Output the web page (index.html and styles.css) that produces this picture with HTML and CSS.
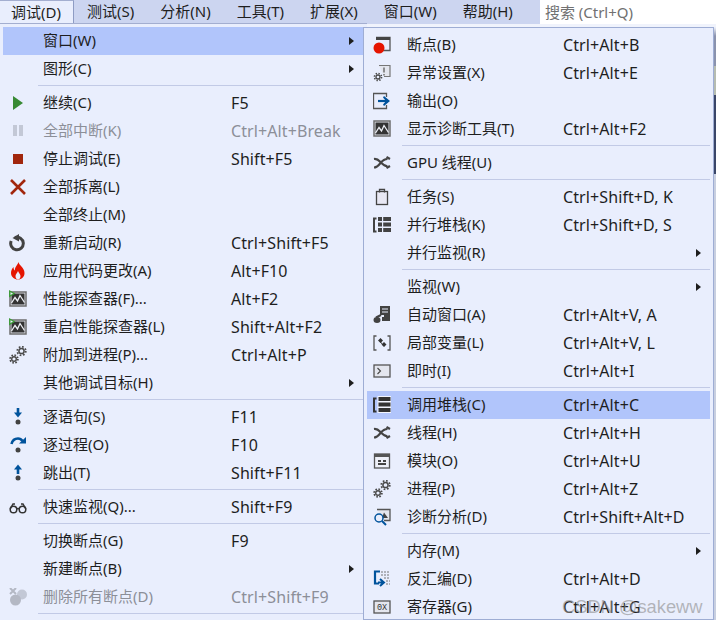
FILE: index.html
```html
<!DOCTYPE html>
<html lang="zh-CN">
<head>
    <meta charset="UTF-8">
    <title>调试菜单</title>
    <link rel="stylesheet" href="styles.css">
</head>
<body>
<svg class="sprites" width="0" height="0">
    <symbol id="i-perf" viewBox="0 0 18 18">
        <rect x="1" y="2" width="16" height="14" fill="#e4e6ee" stroke="#6d6d6d" stroke-width="1.500"/>
        <path d="M2.500 3.500h13v11h-13z" fill="#333"/>
        <path d="M2.500 13l3.500-5.500 2.500 3.500 2.500-5.500 4.500 7" fill="none" stroke="#eef0f6" stroke-width="1.300"/>
        <path d="M0 0l6.500 3.500-6.500 4z" fill="#3f9b3a"/>
        <path d="M1.500 2.200l2.500 1.300-2.500 1.500z" fill="#e9eefd"/>
    </symbol>
    <symbol id="i-chart" viewBox="0 0 18 18">
        <rect x="1" y="1" width="16" height="15" fill="#e4e6ee" stroke="#6d6d6d" stroke-width="1.500"/>
        <path d="M2.500 2.500h13v12h-13z" fill="#333"/>
        <path d="M2.500 13l3.500-5.500 2.500 3.500 2.500-5.500 4.500 7" fill="none" stroke="#eef0f6" stroke-width="1.300"/>
    </symbol>
    <symbol id="i-gears" viewBox="0 0 18 18">
        <g fill="none" stroke="#4a4a4a">
            <circle cx="12.500" cy="5" r="2.600" stroke-width="1.500"/>
            <circle cx="12.500" cy="5" r="4.300" stroke-width="1.700" stroke-dasharray="1.700 1.680"/>
            <circle cx="5" cy="13" r="2.300" stroke-width="1.400"/>
            <circle cx="5" cy="13" r="3.900" stroke-width="1.700" stroke-dasharray="1.600 1.460"/>
        </g>
    </symbol>
    <symbol id="i-threads" viewBox="0 0 18 18">
        <g fill="none" stroke="#444" stroke-width="2.200">
            <path d="M1 5c3-.5 4.500 1 6.500 3s4 4.500 7 4"/>
            <path d="M1 13.500c3 0 4.500-2 6.500-4.500s3.500-4 7-4"/>
            <path d="M13.500 3l3.500 2M13.500 14l3.500-2"/>
        </g>
    </symbol>
</svg>

<div class="topbar">
    <div class="tab active">调试(D)</div>
    <div class="tab">测试(S)</div>
    <div class="tab">分析(N)</div>
    <div class="tab">工具(T)</div>
    <div class="tab">扩展(X)</div>
    <div class="tab">窗口(W)</div>
    <div class="tab">帮助(H)</div>
    <div class="search">搜索 (Ctrl+Q)</div>
</div>

<div class="menus">
    <div class="menu main">
        <div class="item hot"><span class="icon"></span><span class="label">窗口(W)</span><span class="key"></span><span class="more"></span></div>
        <div class="item"><span class="icon"></span><span class="label">图形(C)</span><span class="key"></span><span class="more"></span></div>
        <div class="sep"></div>
        <div class="item"><span class="icon"><svg viewBox="0 0 18 18"><path d="M4 2l10 7-10 7z" fill="#388a34"/></svg></span><span class="label">继续(C)</span><span class="key">F5</span></div>
        <div class="item off"><span class="icon"><svg viewBox="0 0 18 18"><path d="M4 3h4v11h-4zM10 3h4v11h-4z" fill="#c3c8d6"/></svg></span><span class="label">全部中断(K)</span><span class="key">Ctrl+Alt+Break</span></div>
        <div class="item"><span class="icon"><svg viewBox="0 0 18 18"><rect x="4" y="4" width="10" height="10" fill="#a1260d"/></svg></span><span class="label">停止调试(E)</span><span class="key">Shift+F5</span></div>
        <div class="item"><span class="icon"><svg viewBox="0 0 18 18"><path d="M2 2l14 14M16 2l-14 14" stroke="#a1260d" stroke-width="2.600" fill="none"/></svg></span><span class="label">全部拆离(L)</span><span class="key"></span></div>
        <div class="item"><span class="icon"></span><span class="label">全部终止(M)</span><span class="key"></span></div>
        <div class="item"><span class="icon"><svg viewBox="0 0 18 18"><path d="M6 3.500a6.300 6.300 0 1 1-3.800 3.500" fill="none" stroke="#424242" stroke-width="3"/><path d="M10 0v7.500l-6.500-3.500z" fill="#424242"/></svg></span><span class="label">重新启动(R)</span><span class="key">Ctrl+Shift+F5</span></div>
        <div class="item"><span class="icon"><svg viewBox="0 0 18 18"><path d="M9.500 0c.5 3.500 6 5.500 6 11 0 4-3 6.500-6.500 6.500s-7-2.500-7-6.500c0-2.500 1-4.500 2.500-6 0 2 .5 3 1.500 3.500C5.500 5 8.500 3.500 9.500 0z" fill="#e51400"/><path d="M9 9c.5 2 2.500 3 2.500 5s-1 3.500-2.500 3.500-2.500-1.500-2.500-3.500 2-3 2.500-5z" fill="#e9eefd"/></svg></span><span class="label">应用代码更改(A)</span><span class="key">Alt+F10</span></div>
        <div class="item"><span class="icon"><svg><use href="#i-perf"/></svg></span><span class="label">性能探查器(F)...</span><span class="key">Alt+F2</span></div>
        <div class="item"><span class="icon"><svg><use href="#i-perf"/></svg></span><span class="label">重启性能探查器(L)</span><span class="key">Shift+Alt+F2</span></div>
        <div class="item"><span class="icon"><svg><use href="#i-gears"/></svg></span><span class="label">附加到进程(P)...</span><span class="key">Ctrl+Alt+P</span></div>
        <div class="item"><span class="icon"></span><span class="label">其他调试目标(H)</span><span class="key"></span><span class="more"></span></div>
        <div class="sep"></div>
        <div class="item"><span class="icon"><svg viewBox="0 0 18 18"><path d="M9 0v7" stroke="#00539c" stroke-width="2.600"/><path d="M5 4.500h8l-4 5z" fill="#00539c"/><circle cx="9" cy="14" r="2.500" fill="#424242"/></svg></span><span class="label">逐语句(S)</span><span class="key">F11</span></div>
        <div class="item"><span class="icon"><svg viewBox="0 0 18 18"><path d="M2.500 8c1-4 3.500-5.500 6.500-5.500 2 0 3.500 1 4.500 2.500" fill="none" stroke="#00539c" stroke-width="2.600"/><path d="M10 7.500h7v-6.500z" fill="#00539c"/><circle cx="9" cy="14" r="2.500" fill="#424242"/></svg></span><span class="label">逐过程(O)</span><span class="key">F10</span></div>
        <div class="item"><span class="icon"><svg viewBox="0 0 18 18"><path d="M9 10v-7" stroke="#00539c" stroke-width="2.600"/><path d="M5 5.500h8l-4-5z" fill="#00539c"/><circle cx="9" cy="14" r="2.500" fill="#424242"/></svg></span><span class="label">跳出(T)</span><span class="key">Shift+F11</span></div>
        <div class="sep"></div>
        <div class="item"><span class="icon"><svg viewBox="0 0 18 18"><g fill="none" stroke="#333" stroke-width="1.500"><circle cx="4.500" cy="11.500" r="3.300"/><circle cx="13.500" cy="11.500" r="3.300"/><path d="M7.800 11c.8-.6 1.600-.6 2.400 0M1.200 11l2.800-5h2M16.800 11l-2.800-5h-2"/></g></svg></span><span class="label">快速监视(Q)...</span><span class="key">Shift+F9</span></div>
        <div class="sep"></div>
        <div class="item"><span class="icon"></span><span class="label">切换断点(G)</span><span class="key">F9</span></div>
        <div class="item"><span class="icon"></span><span class="label">新建断点(B)</span><span class="key"></span><span class="more"></span></div>
        <div class="item off"><span class="icon"><svg viewBox="0 0 18 18"><circle cx="13" cy="6.500" r="5" fill="#c3c8d6"/><circle cx="6.500" cy="12" r="5.500" fill="#b4b8c4"/><path d="M1 0l6 6M7 0l-6 6" stroke="#b4b8c4" stroke-width="2"/></svg></span><span class="label">删除所有断点(D)</span><span class="key">Ctrl+Shift+F9</span></div>
        <div class="sep"></div>
    </div>

    <div class="menu sub">
        <div class="item"><span class="icon"><svg viewBox="0 0 18 18"><path d="M3 1.500h14v13h-7" fill="none" stroke="#555" stroke-width="1.300"/><path d="M3 1h14v3h-14z" fill="#444"/><circle cx="6" cy="12" r="5.500" fill="#e51400"/></svg></span><span class="label">断点(B)</span><span class="key">Ctrl+Alt+B</span></div>
        <div class="item"><span class="icon"><svg viewBox="0 0 18 18"><path d="M6 1.500h11v11h-6" fill="#e4e6ee" stroke="#777" stroke-width="1.200"/><path d="M11 3.500v5M11 10v1.500" stroke="#777" stroke-width="1.600"/><g fill="none" stroke="#4a4a4a"><circle cx="5" cy="13" r="2" stroke-width="1.300"/><circle cx="5" cy="13" r="3.600" stroke-width="1.500" stroke-dasharray="1.400 1.430"/></g></svg></span><span class="label">异常设置(X)</span><span class="key">Ctrl+Alt+E</span></div>
        <div class="item"><span class="icon"><svg viewBox="0 0 18 18"><path d="M13.500 5v-3.500h-13v15h13v-3.500" fill="none" stroke="#555" stroke-width="1.300"/><path d="M5 9h9" stroke="#00539c" stroke-width="2.200"/><path d="M11 4l6 5-6 5-1-1.500 3-3.500-3-3.500z" fill="#00539c"/></svg></span><span class="label">输出(O)</span></div>
        <div class="item"><span class="icon"><svg><use href="#i-chart"/></svg></span><span class="label">显示诊断工具(T)</span><span class="key">Ctrl+Alt+F2</span></div>
        <div class="sep"></div>
        <div class="item"><span class="icon"><svg><use href="#i-threads"/></svg></span><span class="label">GPU 线程(U)</span></div>
        <div class="sep"></div>
        <div class="item"><span class="icon"><svg viewBox="0 0 18 18"><rect x="3.500" y="3.500" width="11" height="13" fill="#e8e8f4" stroke="#444" stroke-width="1.300"/><path d="M6.500 4.500v-3h5v3" fill="none" stroke="#444" stroke-width="1.300"/></svg></span><span class="label">任务(S)</span><span class="key">Ctrl+Shift+D, K</span></div>
        <div class="item"><span class="icon"><svg viewBox="0 0 18 18"><path d="M5 1h13v4h-13zM5 6.500h13v4h-13zM5 12h13v4h-13z" fill="#424242"/><path d="M9 1h1.200v15h-1.200z" fill="#e9eefd"/><path d="M3.500 2.500h-2.500v13h2.500" fill="none" stroke="#424242" stroke-width="2"/></svg></span><span class="label">并行堆栈(K)</span><span class="key">Ctrl+Shift+D, S</span></div>
        <div class="item"><span class="icon"></span><span class="label">并行监视(R)</span><span class="key"></span><span class="more"></span></div>
        <div class="sep"></div>
        <div class="item"><span class="icon"></span><span class="label">监视(W)</span><span class="key"></span><span class="more"></span></div>
        <div class="item"><span class="icon"><svg viewBox="0 0 18 18"><path d="M7 0h10v15h-8v-4h2v-2h-4z" fill="#424242"/><path d="M9 3h6M9 6h6" stroke="#e9eefd"/><ellipse cx="4" cy="14" rx="3.500" ry="3" fill="#424242"/><path d="M3 11.500l5-2.500" stroke="#424242" stroke-width="2"/></svg></span><span class="label">自动窗口(A)</span><span class="key">Ctrl+Alt+V, A</span></div>
        <div class="item"><span class="icon"><svg viewBox="0 0 18 18"><path d="M3.500 2h-2.500v14h2.500M14.500 2h2.500v14h-2.500" fill="none" stroke="#555" stroke-width="1.300"/><path d="M5 6.500l2.500-2.500 2.500 2.500-2.500 2.500zM8.500 10.500l2.500-2.500 2.500 2.500-2.500 2.500z" fill="#333"/><path d="M7.500 8l2.500 3" stroke="#333"/></svg></span><span class="label">局部变量(L)</span><span class="key">Ctrl+Alt+V, L</span></div>
        <div class="item"><span class="icon"><svg viewBox="0 0 18 18"><rect x="1" y="3" width="16" height="12" fill="#e4e6ee" stroke="#555" stroke-width="1.300"/><path d="M4.500 6l3 3-3 3" fill="none" stroke="#444" stroke-width="1.100"/></svg></span><span class="label">即时(I)</span><span class="key">Ctrl+Alt+I</span></div>
        <div class="sep"></div>
        <div class="item hot"><span class="icon"><svg viewBox="0 0 18 18"><path d="M4.500 0h13.500v17h-13.500z" fill="#f2f5ff"/><path d="M5.500 1h12v4h-12zM5.500 6.500h12v4h-12zM5.500 12h12v4h-12z" fill="#333"/><path d="M3.500 2.500h-2.500v13h2.500" fill="none" stroke="#333" stroke-width="2"/></svg></span><span class="label">调用堆栈(C)</span><span class="key">Ctrl+Alt+C</span></div>
        <div class="item"><span class="icon"><svg><use href="#i-threads"/></svg></span><span class="label">线程(H)</span><span class="key">Ctrl+Alt+H</span></div>
        <div class="item"><span class="icon"><svg viewBox="0 0 18 18"><rect x="1.500" y="2" width="15" height="14" fill="#eef0f8" stroke="#555" stroke-width="1.300"/><path d="M1.500 2h15v3h-15z" fill="#555"/><path d="M5 8h3v2h-3zM10 8h3v2h-3zM5 11h8v2h-8z" fill="#444"/></svg></span><span class="label">模块(O)</span><span class="key">Ctrl+Alt+U</span></div>
        <div class="item"><span class="icon"><svg><use href="#i-gears"/></svg></span><span class="label">进程(P)</span><span class="key">Ctrl+Alt+Z</span></div>
        <div class="item"><span class="icon"><svg viewBox="0 0 18 18"><path d="M4 1.500h13v11h-6" fill="#e4e6ee" stroke="#555" stroke-width="1.300"/><path d="M11 4.500l4 5.500h-6z" fill="#444"/><circle cx="6" cy="10" r="4" fill="#e9eefd" stroke="#00539c" stroke-width="1.500"/><path d="M9 13l4 4" stroke="#00539c" stroke-width="2"/></svg></span><span class="label">诊断分析(D)</span><span class="key">Ctrl+Shift+Alt+D</span></div>
        <div class="sep"></div>
        <div class="item"><span class="icon"></span><span class="label">内存(M)</span><span class="key"></span><span class="more"></span></div>
        <div class="item"><span class="icon"><svg viewBox="0 0 18 18"><path d="M7 1.500h-5v12h4" fill="none" stroke="#00539c" stroke-width="2.200"/><path d="M5 12.500h5M7 9l4 3.500-4 3.500" fill="none" stroke="#00539c" stroke-width="2"/><path d="M8 2h9M8 5h9M11 8h6M13 11h4M13 14h4" stroke="#777" stroke-dasharray="2 1"/></svg></span><span class="label">反汇编(D)</span><span class="key">Ctrl+Alt+D</span></div>
        <div class="item"><span class="icon"><svg viewBox="0 0 18 18"><rect x="1" y="3" width="16" height="12" fill="#e4e6ee" stroke="#555" stroke-width="1.300"/><text x="9" y="12" class="reg">0X</text></svg></span><span class="label">寄存器(G)</span><span class="key">Ctrl+Alt+G</span></div>
    </div>
</div>

<div class="mark">CSDN @sakeww</div>
</body>
</html>
```

FILE: styles.css
```css
html, body {
    overflow: hidden;

    height: 620px;
    margin: 0;
}

body {
    font-family: 'Noto Sans', 'Noto Sans CJK SC', sans-serif;
    font-size: 15px;

    position: relative;

    width: 716px;

    color: #1e1e1e;
    background-color: #f0f3fc;
}

.sprites {
    position: absolute;
}

.topbar {
    display: flex;

    height: 24px;

    background-color: #ccd5f0;
}

.tab {
    line-height: 22px;

    padding: 0 13px;
}

.tab.active {
    box-sizing: border-box;
    width: 74px;
    padding: 0 0 0 11px;

    border-top: 1px solid #a3aed0;
    border-right: 1px solid #8e9cc4;
    background-color: #e9eefd;
}

.search {
    line-height: 24px;

    flex: 1;

    margin-left: 14px;
    padding-left: 5px;

    color: #717171;
    background-color: #fff;
}

.menus {
    display: flex;
    align-items: flex-start;

    background: linear-gradient(#f0f3fc 3px, #8a92ad 12px, #8a92ad 42px, #b6bcb0 42px, #b6bcb0 71px, #3a4668 71px, #3a4668 150px, #c8cfe0 150px) right top / 2px 100% no-repeat;
}

.menu {
    box-sizing: border-box;

    background-color: #e9eefd;
}

.main {
    width: 367px;
    height: 597px;
    margin-top: -1px;
    padding: 3px 4px 0 3px;

    border-top: 1px solid #a3aed0;
}

.sub {
    position: relative;

    width: 351px;
    height: 593px;
    margin-top: 3px;
    margin-left: -4px;
    padding: 3px 3px 0;

    border: 1px solid #9eadd4;
}

.item {
    display: flex;
    align-items: center;

    height: 28px;
}

.item.hot {
    background-color: #b1c5fb;
}

.item.off {
    color: #8c8f98;
}

.icon {
    flex: none;

    width: 34px;
    height: 18px;
    padding-left: 6px;
}

.icon svg {
    display: block;

    width: 18px;
    height: 18px;
}

.label {
    flex: none;

    width: 188px;
    padding-bottom: 3px;
}

.sub .label {
    width: 156px;
}

.key {
    font-size: 16px;

    flex: 1;

    letter-spacing: .1px;
}

.more {
    width: 0;
    height: 0;
    margin-right: 9px;

    border-top: 4.5px solid transparent;
    border-bottom: 4.5px solid transparent;
    border-left: 5px solid #1e1e1e;
}

.sep {
    height: 1px;
    margin: 2px 0 3px 35px;

    background-color: #c2cae6;
}

.reg {
    font-family: 'Liberation Mono', monospace;
    font-size: 8.500px;

    fill: #333;
    text-anchor: middle;
}

.mark {
    font-family: 'Liberation Sans', sans-serif;
    font-size: 18.300px;

    position: absolute;
    top: 596px;
    left: 562px;

    color: rgba(140, 140, 140, .6);
}
```
